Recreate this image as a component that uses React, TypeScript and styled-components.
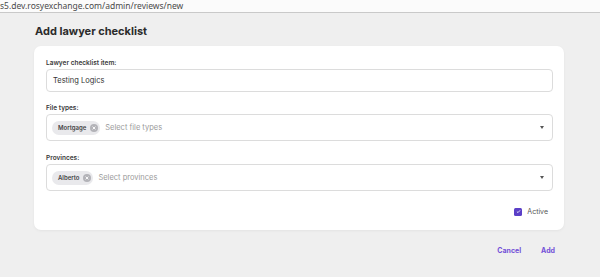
import React from "react";
import styled, { createGlobalStyle } from "styled-components";

const Global = createGlobalStyle`
  html, body { margin: 0; padding: 0; }
  body {
    background: #efefef;
    font-family: Inter, "Noto Sans", sans-serif;
    width: 600px;
    height: 277px;
    overflow: hidden;
  }
`;

const AddressBar = styled.div`
  height: 12px;
  background: #fbfbfb;
  border-bottom: 1px solid #c9c9c9;
  font-family: "Noto Sans", Inter, sans-serif;
  font-size: 8.5px;
  line-height: 11px;
  color: #4a4a4a;
  white-space: nowrap;
  overflow: hidden;
`;

const Page = styled.div`
  padding: 0 36px 0 34px;
`;

const Title = styled.h1`
  margin: 0;
  padding: 10px 0 0 1px;
  height: 23px;
  font-size: 11px;
  line-height: 16px;
  font-weight: 700;
  color: #2b2b2b;
`;

const Card = styled.div`
  background: #fff;
  border-radius: 7px;
  box-shadow: 0 1px 3px rgba(0, 0, 0, 0.05);
  padding: 13px 11px 14px 12px;
  display: flex;
  flex-direction: column;
`;

const Field = styled.div<{ $gap?: number }>`
  display: flex;
  flex-direction: column;
  margin-bottom: ${(p) => p.$gap ?? 0}px;
`;

const Label = styled.label`
  font-size: 6.5px;
  line-height: 9px;
  font-weight: 600;
  color: #3a3a3a;
  margin-bottom: 1px;
`;

const TextBox = styled.div`
  height: 21px;
  border: 1px solid #dcdcdc;
  border-radius: 4px;
  display: flex;
  align-items: center;
  padding-left: 6px;
  font-size: 7.5px;
  color: #333;
`;

const Select = styled.div`
  height: 25px;
  border: 1px solid #dcdcdc;
  border-radius: 4px;
  display: flex;
  align-items: center;
  padding: 0 8px 0 5px;
  gap: 5px;
`;

const Chip = styled.span`
  display: inline-flex;
  align-items: center;
  gap: 4px;
  height: 14px;
  padding: 0 2px 0 6px;
  border-radius: 7px;
  background: #e9e9ec;
  font-size: 6px;
  font-weight: 600;
  color: #444;
`;

const ChipX = styled.span`
  width: 8px;
  height: 8px;
  border-radius: 50%;
  background: #b3b3b8;
  display: inline-flex;
  align-items: center;
  justify-content: center;
`;

const Placeholder = styled.span`
  flex: 1;
  font-size: 7.5px;
  color: #9a9a9a;
`;

const Caret = styled.span`
  width: 0;
  height: 0;
  border-left: 2.5px solid transparent;
  border-right: 2.5px solid transparent;
  border-top: 3px solid #555;
`;

const CheckRow = styled.div`
  display: flex;
  justify-content: flex-end;
  align-items: center;
  gap: 5px;
  padding-right: 5px;
  margin-top: 16px;
  font-size: 7px;
  color: #555;
`;

const Check = styled.span`
  width: 8px;
  height: 8px;
  border-radius: 1.5px;
  background: #5b3fc7;
  display: inline-flex;
  align-items: center;
  justify-content: center;
`;

const Footer = styled.div`
  display: flex;
  justify-content: flex-end;
  gap: 20px;
  padding: 16px 9px 0 0;
`;

const LinkButton = styled.button`
  border: 0;
  background: none;
  padding: 0;
  font-family: inherit;
  font-size: 7px;
  font-weight: 700;
  color: #7350d8;
  cursor: pointer;
`;

const XIcon = () => (
  <svg width="4" height="4" viewBox="0 0 4 4">
    <path d="M0.6 0.6 L3.4 3.4 M3.4 0.6 L0.6 3.4" stroke="#fff" strokeWidth="0.9" />
  </svg>
);

const CheckIcon = () => (
  <svg width="5" height="5" viewBox="0 0 5 5">
    <path d="M0.9 2.6 L2 3.6 L4.1 1.3" stroke="#fff" strokeWidth="0.8" fill="none" />
  </svg>
);

export default function App() {
  return (
    <>
      <Global />
      <AddressBar>s5.dev.rosyexchange.com/admin/reviews/new</AddressBar>
      <Page>
        <Title>Add lawyer checklist</Title>
        <Card>
          <Field $gap={12}>
            <Label>Lawyer checklist item:</Label>
            <TextBox>Testing Logics</TextBox>
          </Field>
          <Field $gap={13}>
            <Label>File types:</Label>
            <Select>
              <Chip>
                Mortgage
                <ChipX>
                  <XIcon />
                </ChipX>
              </Chip>
              <Placeholder>Select file types</Placeholder>
              <Caret />
            </Select>
          </Field>
          <Field>
            <Label>Provinces:</Label>
            <Select>
              <Chip>
                Alberto
                <ChipX>
                  <XIcon />
                </ChipX>
              </Chip>
              <Placeholder>Select provinces</Placeholder>
              <Caret />
            </Select>
          </Field>
          <CheckRow>
            <Check>
              <CheckIcon />
            </Check>
            Active
          </CheckRow>
        </Card>
        <Footer>
          <LinkButton>Cancel</LinkButton>
          <LinkButton>Add</LinkButton>
        </Footer>
      </Page>
    </>
  );
}
